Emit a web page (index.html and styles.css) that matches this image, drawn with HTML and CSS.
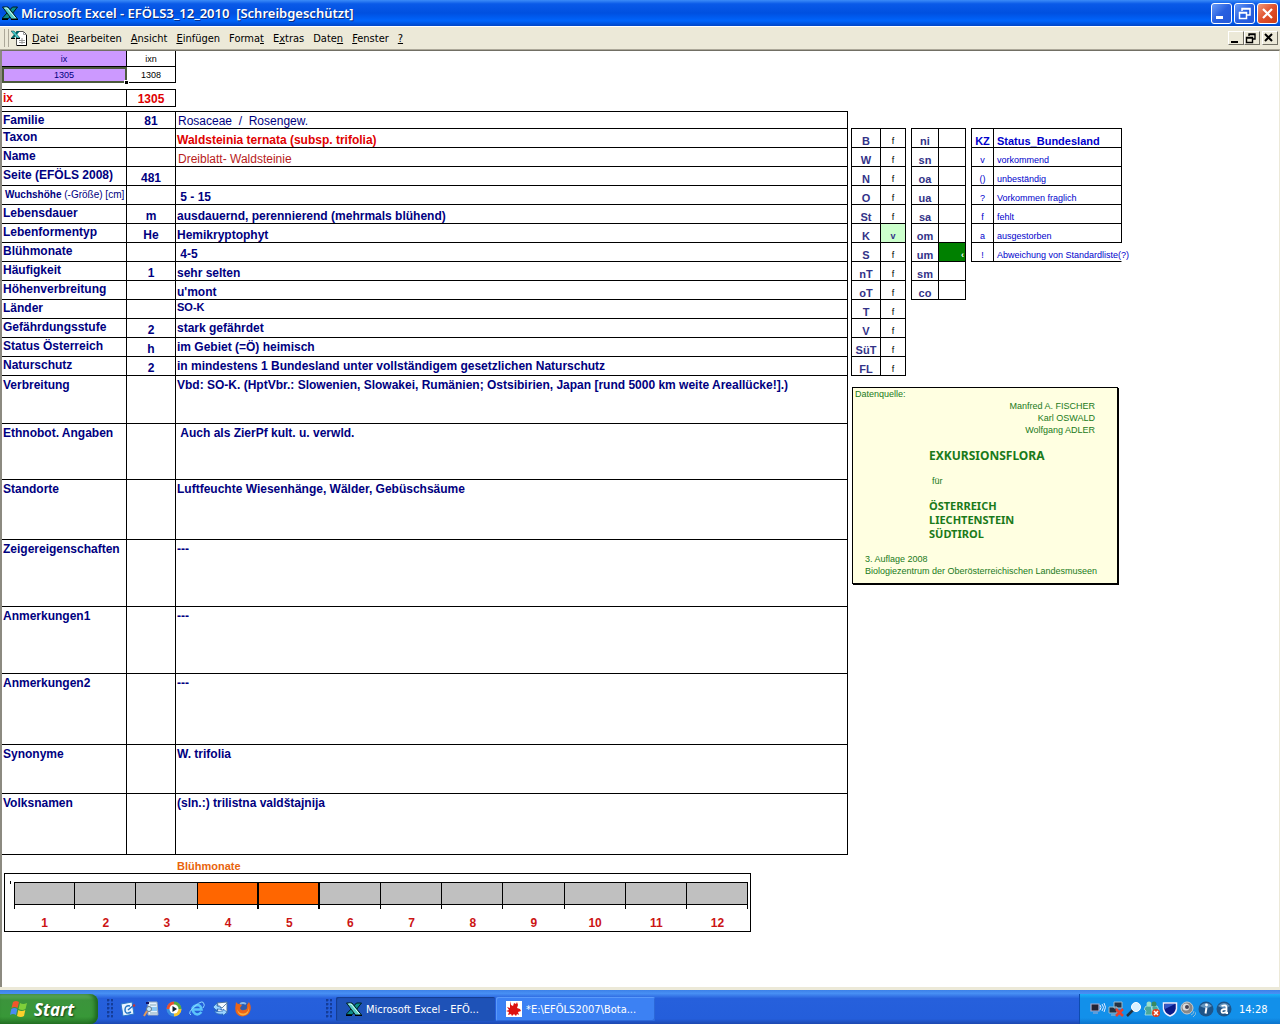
FILE: index.html
```html
<!DOCTYPE html>
<html lang="de">
<head>
    <meta charset="UTF-8">
    <title>Microsoft Excel - EFÖLS3_12_2010</title>
    <link rel="stylesheet" href="styles.css">
</head>
<body>
    <svg class="defs" width="0" height="0" aria-hidden="true">
        <symbol id="excel" viewBox="0 0 16 16">
            <path d="M0 13.500h6.500l9-11.500h-5z" fill="#0c8c8c" stroke="#001c1c"/>
            <path d="M.5 2h5.500l9.500 12h-6z" fill="#58ccc4" stroke="#001c1c"/>
            <path d="M2.500 3h2.500l8.500 10" fill="none" stroke="#d8fff8"/>
            <path d="M0 14.500h6M9 14.500h7" stroke="#000"/>
        </symbol>
    </svg>

    <header class="title-bar">
        <svg class="icon"><use href="#excel"/></svg>
        <h1>Microsoft Excel - EFÖLS3_12_2010 &nbsp;[Schreibgeschützt]</h1>
        <div class="window-buttons">
            <button aria-label="Minimieren"><svg viewBox="0 0 19 19"><path d="M4 13.500h7" stroke="#fff" stroke-width="3"/></svg></button>
            <button aria-label="Wiederherstellen"><svg viewBox="0 0 19 19"><path d="M7 7V4.500h8V11h-3M7 5h8" fill="none" stroke="#fff" stroke-width="1.500"/><path d="M4.500 8.500h7v6h-7zM4 9h8" fill="none" stroke="#fff" stroke-width="1.500"/></svg></button>
            <button class="close" aria-label="Schließen"><svg viewBox="0 0 19 19"><path d="M5 5l9 9M14 5l-9 9" stroke="#fff" stroke-width="2.200"/></svg></button>
        </div>
    </header>

    <nav class="menu-bar">
        <span class="grip"></span>
        <svg class="icon" viewBox="0 0 16 16">
            <path d="M5.500 1.500h7l3 3v11h-10z" fill="#fff" stroke="#555"/>
            <path d="M15.500 5v10.500H6" fill="none" stroke="#000"/>
            <path d="M12.500 1.500v3h3M8 10.500h6M8 12.500h6M11 8v6" fill="none" stroke="#999"/>
            <path d="M9 1H6L0 8h3z" fill="#066"/>
            <path d="M0 1h3l6 7H6z" fill="#4cc" stroke="#033" stroke-width=".5"/>
            <path d="M0 8.500h4M5 8.500h4" stroke="#000"/>
        </svg>
        <button><u>D</u>atei</button>
        <button><u>B</u>earbeiten</button>
        <button><u>A</u>nsicht</button>
        <button><u>E</u>infügen</button>
        <button>Forma<u>t</u></button>
        <button>E<u>x</u>tras</button>
        <button>Date<u>n</u></button>
        <button><u>F</u>enster</button>
        <button><u>?</u></button>
        <div class="doc-buttons">
            <button aria-label="Mappe minimieren"><svg viewBox="0 0 12 12"><path d="M2 10h7" stroke="#000" stroke-width="2"/></svg></button>
            <button aria-label="Mappe wiederherstellen"><svg viewBox="0 0 12 12"><path d="M4 4V2h6v5H8M4 2.500h6M1.500 5.500h6v5h-6zM1.500 6h6" fill="none" stroke="#000" stroke-width="1.400"/></svg></button>
            <button class="doc-close" aria-label="Mappe schließen"><svg viewBox="0 0 12 12"><path d="M2 2l7 7M9 2l-7 7" stroke="#000" stroke-width="2"/></svg></button>
        </div>
    </nav>

    <main class="sheet">
        <section class="record">
            <table class="grid index-table">
                <tr><td class="col-label lilac">ix</td><td class="col-code">ixn</td></tr>
                <tr><td class="col-label lilac selected">1305<span class="handle"></span></td><td class="col-code">1308</td></tr>
            </table>

            <table class="grid current-table">
                <tr><th class="col-label" scope="row">ix</th><td class="col-code">1305</td></tr>
            </table>

            <table class="grid detail-table">
                <tr class="first"><th class="col-label" scope="row">Familie</th><td class="col-code">81</td><td class="plain">Rosaceae&nbsp; /&nbsp; Rosengew.</td></tr>
                <tr><th scope="row">Taxon</th><td class="col-code"></td><td class="taxon">Waldsteinia ternata (subsp. trifolia)</td></tr>
                <tr><th scope="row">Name</th><td class="col-code"></td><td class="plain name">Dreiblatt- Waldsteinie</td></tr>
                <tr><th scope="row">Seite (EFÖLS 2008)</th><td class="col-code">481</td><td></td></tr>
                <tr><th class="small" scope="row"><b>Wuchshöhe</b> (-Größe) [cm]</th><td class="col-code"></td><td>&nbsp;5 - 15</td></tr>
                <tr><th scope="row">Lebensdauer</th><td class="col-code">m</td><td>ausdauernd, perennierend (mehrmals blühend)</td></tr>
                <tr><th scope="row">Lebenformentyp</th><td class="col-code">He</td><td>Hemikryptophyt</td></tr>
                <tr><th scope="row">Blühmonate</th><td class="col-code"></td><td>&nbsp;4-5</td></tr>
                <tr><th scope="row">Häufigkeit</th><td class="col-code">1</td><td>sehr selten</td></tr>
                <tr><th scope="row">Höhenverbreitung</th><td class="col-code"></td><td>u'mont</td></tr>
                <tr><th scope="row">Länder</th><td class="col-code"></td><td class="lands">SO-K</td></tr>
                <tr class="mid"><th scope="row">Gefährdungsstufe</th><td class="col-code">2</td><td>stark gefährdet</td></tr>
                <tr class="mid"><th scope="row">Status Österreich</th><td class="col-code">h</td><td>im Gebiet (=Ö) heimisch</td></tr>
                <tr class="mid"><th scope="row">Naturschutz</th><td class="col-code">2</td><td>in mindestens 1 Bundesland unter vollständigem gesetzlichen Naturschutz</td></tr>
                <tr class="tall h48"><th scope="row">Verbreitung</th><td></td><td>Vbd: SO-K. (HptVbr.: Slowenien, Slowakei, Rumänien; Ostsibirien, Japan [rund 5000 km weite Areallücke!].)</td></tr>
                <tr class="tall h56"><th scope="row">Ethnobot. Angaben</th><td></td><td>&nbsp;Auch als ZierPf kult. u. verwld.</td></tr>
                <tr class="tall h60"><th scope="row">Standorte</th><td></td><td>Luftfeuchte Wiesenhänge, Wälder, Gebüschsäume</td></tr>
                <tr class="tall h67"><th scope="row">Zeigereigenschaften</th><td></td><td>---</td></tr>
                <tr class="tall h67"><th scope="row">Anmerkungen1</th><td></td><td>---</td></tr>
                <tr class="tall h71"><th scope="row">Anmerkungen2</th><td></td><td>---</td></tr>
                <tr class="tall h49"><th scope="row">Synonyme</th><td></td><td>W. trifolia</td></tr>
                <tr class="tall h61"><th scope="row">Volksnamen</th><td></td><td>(sln.:) trilistna valdštajnija</td></tr>
            </table>

            <h2>Blühmonate</h2>
            <div class="chart">
                <ol class="months">
                    <li><span class="bar"></span>1</li>
                    <li><span class="bar"></span>2</li>
                    <li><span class="bar"></span>3</li>
                    <li><span class="bar bloom"></span>4</li>
                    <li><span class="bar bloom"></span>5</li>
                    <li><span class="bar"></span>6</li>
                    <li><span class="bar"></span>7</li>
                    <li><span class="bar"></span>8</li>
                    <li><span class="bar"></span>9</li>
                    <li><span class="bar"></span>10</li>
                    <li><span class="bar"></span>11</li>
                    <li><span class="bar"></span>12</li>
                </ol>
            </div>
        </section>

        <aside class="side">
            <div class="side-tables">
                <table class="grid key-table lands-table">
                    <tr><th scope="row">B</th><td>f</td></tr>
                    <tr><th scope="row">W</th><td>f</td></tr>
                    <tr><th scope="row">N</th><td>f</td></tr>
                    <tr><th scope="row">O</th><td>f</td></tr>
                    <tr><th scope="row">St</th><td>f</td></tr>
                    <tr><th scope="row">K</th><td class="present">v</td></tr>
                    <tr><th scope="row">S</th><td>f</td></tr>
                    <tr><th scope="row">nT</th><td>f</td></tr>
                    <tr><th scope="row">oT</th><td>f</td></tr>
                    <tr><th scope="row">T</th><td>f</td></tr>
                    <tr><th scope="row">V</th><td>f</td></tr>
                    <tr><th scope="row">SüT</th><td>f</td></tr>
                    <tr><th scope="row">FL</th><td>f</td></tr>
                </table>

                <table class="grid key-table height-table">
                    <tr><th scope="row">ni</th><td></td></tr>
                    <tr><th scope="row">sn</th><td></td></tr>
                    <tr><th scope="row">oa</th><td></td></tr>
                    <tr><th scope="row">ua</th><td></td></tr>
                    <tr><th scope="row">sa</th><td></td></tr>
                    <tr><th scope="row">om</th><td></td></tr>
                    <tr><th scope="row">um</th><td class="marked">‹</td></tr>
                    <tr><th scope="row">sm</th><td></td></tr>
                    <tr><th scope="row">co</th><td></td></tr>
                </table>

                <table class="grid key-table status-table">
                    <tr><th scope="col">KZ</th><th scope="col">Status_Bundesland</th></tr>
                    <tr><td>v</td><td>vorkommend</td></tr>
                    <tr><td>()</td><td>unbeständig</td></tr>
                    <tr><td>?</td><td>Vorkommen fraglich</td></tr>
                    <tr><td>f</td><td>fehlt</td></tr>
                    <tr><td>a</td><td>ausgestorben</td></tr>
                    <tr><td>!</td><td class="open">Abweichung von Standardliste(?)</td></tr>
                </table>
            </div>

            <div class="source">
                <p class="source-title">Datenquelle:</p>
                <p class="authors">Manfred A. FISCHER<br>Karl OSWALD<br>Wolfgang ADLER</p>
                <div class="book">
                    <h3>EXKURSIONSFLORA</h3>
                    <p>für</p>
                    <h4>ÖSTERREICH<br>LIECHTENSTEIN<br>SÜDTIROL</h4>
                </div>
                <p class="edition">3. Auflage 2008<br>Biologiezentrum der Oberösterreichischen Landesmuseen</p>
            </div>
        </aside>
    </main>

    <footer class="taskbar">
        <button class="start">
            <svg viewBox="0 0 20 20">
                <path d="M4 3q3-2 6 0l-1.500 6q-3-2-6 0z" fill="#f0562c"/>
                <path d="M11 4q3 2 7 0l-1.500 6q-3 2-7 0z" fill="#7fcf3a"/>
                <path d="M2.300 10q3-2 6 0L7 16q-3-2-6 0z" fill="#4a8cf0"/>
                <path d="M9.300 11q3 2 7 0L15 17q-3 2-7 0z" fill="#fbd02c"/>
            </svg>
            Start
        </button>

        <div class="quick-launch">
            <span class="dots"></span>
            <a href="#" aria-label="Desktop anzeigen"><svg viewBox="0 0 16 16"><path d="M1 3l11-2 2 12-11 2z" fill="#e8f4ff" stroke="#2a78c8"/><path d="M10 5q-5-1-5 4t6 2M8 9l6-5" fill="none" stroke="#2274c4" stroke-width="1.500"/><path d="M13 5l2-1" stroke="#c33" stroke-width="2"/></svg></a>
            <a href="#" aria-label="Suche"><svg viewBox="0 0 16 16"><path d="M5 1h9l1 13H5z" fill="#e4f2ff" stroke="#9ab"/><path d="M3 2h3" stroke="#116" stroke-width="2"/><path d="M7 4h6M7 12h7" stroke="#8ab"/><path d="M6 6h8v4H6z" fill="#8cc8f4"/><circle cx="6" cy="8" r="2.500" fill="#c4e8fc" stroke="#678"/><path d="M4 10l-3 5" stroke="#e09858" stroke-width="2"/></svg></a>
            <a href="#" aria-label="Media Player"><svg viewBox="0 0 16 16"><circle cx="8" cy="8" r="7.500" fill="#3a8ee0"/><path d="M8 8V.5A7.500 7.500 0 0 0 .5 8z" fill="#e85030"/><path d="M8 8h7.500A7.500 7.500 0 0 0 8 .5z" fill="#58a840"/><path d="M8 8v7.500A7.500 7.500 0 0 0 15.500 8z" fill="#f4c430"/><circle cx="8" cy="8" r="4.500" fill="#fff"/><path d="M6.500 5l4.500 3-4.500 3z" fill="#123"/></svg></a>
            <a href="#" aria-label="Internet Explorer"><svg viewBox="0 0 16 16"><path d="M12.500 11Q8 16 4.500 11T8 4q4 0 4.500 4.500H4.500" fill="none" stroke="#5cc4fa" stroke-width="2.500"/><path d="M2 14Q-2 12 6 5t9-2q1 1-1 4" fill="none" stroke="#8cd8ff"/></svg></a>
            <a href="#" aria-label="Outlook Express"><svg viewBox="0 0 16 16"><path d="M5 2l10-1v11l-9 1z" fill="#f4f9ff" stroke="#579"/><path d="M5 3l5 4 5-5" fill="none" stroke="#68a"/><path d="M1 6l4-4v3q4 0 5 4-2-1-5-1v2zM15 11l-4 4v-2q-6 1-9-3 4 1 9 0V8z" fill="#9cd4ff" stroke="#1c60b8" stroke-width=".7"/></svg></a>
            <a href="#" aria-label="Firefox"><svg viewBox="0 0 16 16"><circle cx="8" cy="7" r="6.500" fill="#2c5cb0"/><path d="M5 3q3-2 6 0" fill="none" stroke="#88b8ec" stroke-width="2"/><path d="M1 1q1 2 3 2l3 1-2 3q1 3 4 2 4 0 3-5l2-3q3 5 1 9.500T7 15.500Q-1 14 .5 5z" fill="#ec6418"/><path d="M2 8q2 5 7 4.500T14 5q1 9-6 9.500Q3 14 2 8z" fill="#f8b040"/></svg></a>
            <span class="dots"></span>
        </div>

        <div class="tasks">
            <button class="active"><svg class="icon"><use href="#excel"/></svg>Microsoft Excel - EFÖ...</button>
            <button>
                <svg class="icon" viewBox="0 0 16 16"><path d="M0 0h16v16H0z" fill="#fff"/><path d="M4 0l1 4 2 1 1-3 2 1 1-2 1 3-1 3 3 1 1 2-3 1 1 3-2-1-1 2-2-2-2 2-1-2-3 1 1-3-3-1 3-1-2-3 3 1z" fill="#d11"/></svg>
                *E:\EFÖLS2007\Bota...
            </button>
        </div>

        <div class="tray">
            <svg viewBox="0 0 16 16"><path d="M1 3h8v7H1zM3 12h5" fill="#223" stroke="#aac" stroke-width="1.200"/><path d="M10 4q2 2 0 5M12 3q3 3 0 7M14 2q3 4 0 9" fill="none" stroke="#e0eaff"/></svg>
            <svg viewBox="0 0 16 16"><path d="M6 1h8v6H6zM1 6h8v6H1zM3 14h5" fill="#234" stroke="#9bc"/><path d="M8 8l7 7M15 8l-7 7" stroke="#e8402c" stroke-width="2.500"/></svg>
            <svg viewBox="0 0 16 16"><path d="M7 9l-6 6" stroke="#234" stroke-width="2.500"/><circle cx="10" cy="6" r="4.500" fill="#d8f0ff" stroke="#fff"/></svg>
            <svg viewBox="0 0 16 16"><path d="M2 5h5l1 4 2 5H1l1-4-2-2zM8 5h5l2 4-3 5H8z" fill="#4aa89c" stroke="#bee" stroke-width=".7"/><circle cx="5" cy="3" r="2.500" fill="#9de0c8"/><circle cx="10" cy="3" r="2.500" fill="#3a8a60"/><circle cx="12" cy="12" r="4" fill="#e0401c"/><path d="M10 10l4 4M14 10l-4 4" stroke="#fff" stroke-width="1.500"/></svg>
            <svg viewBox="0 0 16 16"><path d="M1.500 2h13v6q-1 5-6.500 7Q2.500 13 1.500 8z" fill="#0a1a88" stroke="#eef" stroke-width="1.500"/><path d="M3 3h10L3 8z" fill="#3458c8"/></svg>
            <svg viewBox="0 0 16 16"><circle cx="7" cy="7" r="6" fill="#888" stroke="#ccc"/><circle cx="6" cy="6" r="3.500" fill="#ddd"/><circle cx="7" cy="6" r="2" fill="#445"/><path d="M11 14q3-1 3-4M13 16q3-2 3-5" fill="none" stroke="#8bd"/></svg>
            <svg viewBox="0 0 16 16"><circle cx="8" cy="8" r="7.500" fill="#1e5488"/><path d="M2 5q6-6 12 0-6 4-12 0z" fill="#6496c0"/><circle cx="8.500" cy="4" r="1.400" fill="#fff"/><path d="M8.500 6.500l-1 6" fill="none" stroke="#fff" stroke-width="2"/></svg>
            <svg viewBox="0 0 16 16"><circle cx="8" cy="8" r="7.500" fill="#1e5488"/><path d="M2 5q6-6 12 0-6 4-12 0z" fill="#6496c0"/><path d="M5.500 5q5-2 5 1.500V12h1.500M10 8q-5 0-4.500 2.500T10 11" fill="none" stroke="#fff" stroke-width="1.800"/></svg>
            <time>14:28</time>
        </div>
    </footer>
</body>
</html>
```
FILE: styles.css
```css
* {
    box-sizing: border-box;
}

body {
    margin: 0;
    height: 100vh;
    display: flex;
    flex-direction: column;
    background-color: #ece9d8;
    font-family: "Liberation Sans", Arial, sans-serif;
    font-size: 12px;
    color: #000080;
    overflow: hidden;
}

h1, h2, h3, h4, p, ol {
    margin: 0;
    padding: 0;
}

button {
    font: inherit;
    color: inherit;
    border: none;
    background: none;
    padding: 0;
}

svg {
    display: block;
}

.defs {
    position: absolute;
}

.icon {
    width: 16px;
    height: 16px;
    flex: none;
}

/* Title bar */
.title-bar {
    height: 26px;
    flex: none;
    display: flex;
    align-items: center;
    gap: 3px;
    padding: 0 2px;
    background: linear-gradient(#3c8cf8, #0a5ae8 15%, #0050e0 50%, #0064fc 80%, #0046c8);
    color: #fff;
}

.title-bar h1 {
    font-family: "Noto Sans", sans-serif;
    font-size: 13px;
    font-weight: 600;
    text-shadow: 1px 1px #0a2a80;
}

.window-buttons {
    margin-left: auto;
    display: flex;
    gap: 2px;
}

.window-buttons button {
    width: 21px;
    height: 21px;
    border: 1px solid #fff;
    border-radius: 3px;
    background: linear-gradient(135deg, #6a9cf8, #2860e0 50%, #2458d8);
}

.window-buttons .close {
    background: linear-gradient(135deg, #f09878, #e0502c 50%, #cc3c14);
}

/* Menu bar */
.menu-bar {
    height: 24px;
    flex: none;
    display: flex;
    align-items: center;
    border-top: 1px solid #fff;
    border-bottom: 1px solid #aca899;
    padding: 0 2px 0 4px;
    font-family: "DejaVu Sans Condensed", "DejaVu Sans", sans-serif;
    font-size: 11px;
    color: #000;
}

.menu-bar > button {
    padding: 0 4px 0 5px;
}

.grip {
    width: 5px;
    height: 18px;
    margin-right: 2px;
    border-left: 1px solid #aca899;
    border-right: 1px solid #aca899;
}

.doc-buttons {
    margin-left: auto;
    display: flex;
}

.doc-buttons button {
    width: 16px;
    height: 14px;
    border: 1px solid #fff;
    border-right-color: #716f64;
    border-bottom-color: #716f64;
}

.doc-buttons svg {
    width: 12px;
    height: 12px;
}

.doc-buttons .doc-close {
    margin-left: 2px;
}

/* Worksheet */
.sheet {
    flex: 1;
    min-height: 0;
    display: flex;
    background-color: #fff;
    border-top: 1px solid #716f64;
    border-left: 2px solid #8c8a80;
    border-right: 1px solid #ece9d8;
    margin-bottom: 3px;
    overflow: hidden;
}

.record {
    flex: 1;
}

.grid {
    border-collapse: separate;
    border-spacing: 0;
    table-layout: fixed;
    border-top: 1px solid #000;
}

.grid th, .grid td {
    padding: 0 1px;
    line-height: 13px;
    border-right: 1px solid #000;
    border-bottom: 1px solid #000;
    white-space: nowrap;
    text-align: left;
    vertical-align: bottom;
    font-weight: bold;
}

.grid th {
    padding-top: 2px;
    vertical-align: top;
}

.grid .col-label {
    width: 125px;
}

.grid .col-code {
    width: 49px;
    text-align: center;
}

.index-table {
    width: 174px;
    border-top: none;
}

.index-table tr {
    height: 16px;
}

.grid.index-table td {
    font-size: 9px;
    font-weight: normal;
    text-align: center;
}

.index-table .col-code {
    color: #000;
}

.lilac {
    background-color: #cc99ff;
}

.grid .selected {
    position: relative;
    outline: 2px solid #4c5a3c;
    outline-offset: -2px;
}

.handle {
    position: absolute;
    right: -3px;
    bottom: -3px;
    width: 5px;
    height: 5px;
    border: 1px solid #fff;
    background-color: #000;
}

.current-table {
    width: 174px;
    margin: 6px 0 4px;
}

.current-table tr {
    height: 17px;
}

.current-table th, .current-table td {
    color: #e00000;
}

.detail-table {
    width: 100%;
}

.detail-table tr {
    height: 19px;
}

.detail-table .first {
    height: 17px;
}

.detail-table .mid td:last-child {
    vertical-align: middle;
}

.detail-table .tall td {
    vertical-align: top;
}

.detail-table .tall th, .detail-table .tall td {
    padding-top: 3px;
}

.detail-table .h48 { height: 48px; }
.detail-table .h49 { height: 49px; }
.detail-table .h56 { height: 56px; }
.detail-table .h60 { height: 60px; }
.detail-table .h61 { height: 61px; }
.detail-table .h67 { height: 67px; }
.detail-table .h71 { height: 71px; }

.grid .plain {
    padding-left: 2px;
    font-weight: normal;
}

.grid .name {
    color: #b81c1c;
}

.grid .taxon {
    color: #e00000;
}

.grid .small {
    padding-left: 3px;
    font-size: 10px;
    font-weight: normal;
}

.grid .lands {
    padding-top: 1px;
    font-size: 11px;
    vertical-align: top;
}

/* Flowering months */
h2 {
    padding: 4px 0 0 175px;
    font-size: 11px;
    line-height: 14px;
    color: #e8640c;
}

.chart {
    margin: 0 97px 0 2px;
    padding: 8px 2px 0 9px;
    height: 59px;
    border: 1px solid #000;
}

.months {
    position: relative;
    display: grid;
    grid-template-columns: repeat(12, 1fr);
    list-style: none;
}

/* end of the value axis */
.months::before {
    content: "";
    position: absolute;
    left: -4px;
    top: -1px;
    width: 1px;
    height: 3px;
    background-color: #000;
}

.months li {
    text-align: center;
    font-weight: bold;
    line-height: 28px;
    color: #cc1414;
}

.bar {
    display: block;
    height: 27px;
    border-right: 1px solid #000;
    background: linear-gradient(#000 1px, #c0c0c0 1px 22px, #000 22px 23px, #fff 23px);
}

.months li:first-child .bar {
    border-left: 1px solid #000;
}

.bloom {
    border-right-width: 2px;
    background: linear-gradient(#000 1px, #ff6600 1px 22px, #000 22px 23px, #fff 23px);
}

/* Side panel */
.side {
    width: 431px;
    flex: none;
    padding: 77px 0 0 3px;
}

.side-tables {
    display: flex;
    align-items: flex-start;
    gap: 5px;
}

.key-table {
    border-left: 1px solid #000;
    width: 55px;
}

.key-table tr {
    height: 19px;
}

.grid.key-table th, .grid.key-table td {
    vertical-align: bottom;
    text-align: center;
    font-size: 11px;
    line-height: 12px;
}

.key-table th {
    color: #333388;
}

.key-table th:first-child {
    width: 29px;
}

.height-table th:first-child {
    width: 27px;
}

.grid.lands-table td {
    font-size: 9px;
    font-weight: normal;
    color: #000;
}

.grid.lands-table .present {
    background-color: #ccffcc;
    font-weight: bold;
    color: #333388;
}

.grid.height-table .marked {
    background-color: #008000;
    color: #fff;
    font-size: 9px;
    text-align: right;
}

.status-table {
    width: 151px;
}

.status-table th, .status-table td {
    color: #0000cc;
}

.status-table th:first-child {
    width: 22px;
}

.grid.status-table td {
    font-size: 9px;
    font-weight: normal;
}

.grid.status-table th:last-child, .grid.status-table td:last-child {
    padding-left: 3px;
    text-align: left;
}

.grid.status-table .open {
    border-right-color: transparent;
}

/* Source note */
.source {
    width: 266px;
    margin: 11px 0 0 1px;
    padding: 1px 2px 6px;
    border: 1px solid #000;
    box-shadow: 1px 1px #000;
    background-color: #ffffe1;
    color: #1a7a1a;
    font-size: 9px;
    line-height: 12px;
}

.source-title {
    line-height: 11px;
}

.authors {
    padding-right: 20px;
    text-align: right;
}

.book {
    padding: 13px 0 12px 74px;
}

.book p {
    padding: 12px 3px;
}

.book h3 {
    font-family: "Noto Sans", sans-serif;
    font-size: 12px;
    line-height: 14px;
}

.book h4 {
    font-family: "Noto Sans", sans-serif;
    font-size: 11px;
    line-height: 14px;
}

.edition {
    padding-left: 10px;
}

/* Taskbar */
.taskbar {
    height: 34px;
    flex: none;
    display: flex;
    background: linear-gradient(#3c80e8, #4890f4 10%, #2660dc 25%, #245edb 85%, #1c48b0);
    color: #fff;
    font-family: "DejaVu Sans Condensed", "DejaVu Sans", sans-serif;
    font-size: 11px;
}

.start {
    width: 98px;
    margin-top: 4px;
    padding-left: 9px;
    display: flex;
    align-items: center;
    gap: 5px;
    border-radius: 0 8px 8px 0;
    background: linear-gradient(#6cb46c, #3c943c 20%, #389838 75%, #287828);
    box-shadow: inset -3px 0 4px #1c641c;
    font-family: "Open Sans", sans-serif;
    font-size: 17px;
    font-weight: bold;
    font-style: italic;
    text-shadow: 1px 1px 2px #123c12;
}

.start svg {
    width: 20px;
    height: 20px;
}

.quick-launch {
    width: 238px;
    padding: 3px 4px 0 9px;
    display: flex;
    align-items: center;
    gap: 7px;
}

.quick-launch svg {
    width: 16px;
    height: 16px;
}

.dots {
    width: 6px;
    height: 20px;
    background: radial-gradient(circle at 1px 1px, #143c98 1px, transparent 2px) 0 0 / 4px 4px;
}

.dots:last-child {
    margin-left: auto;
}

.tasks {
    flex: 1;
    display: flex;
    gap: 1px;
    padding: 7px 0 3px;
}

.tasks button {
    width: 159px;
    padding-left: 10px;
    display: flex;
    align-items: center;
    gap: 4px;
    border-radius: 2px;
    background-color: #3c81f3;
    box-shadow: inset 1px 1px #5a9afa, inset -1px -1px #2c68d8;
}

.tasks .active {
    background-color: #1e52b7;
    box-shadow: inset 1px 1px 1px #143c8c;
}

.tray {
    width: 201px;
    margin-top: 4px;
    padding-left: 10px;
    display: flex;
    align-items: center;
    gap: 2px;
    border-left: 1px solid #0c4cb0;
    background: linear-gradient(#1cb0f8, #1290ea 15%, #1290ea 80%, #0c74cc);
}

.tray svg {
    width: 16px;
    height: 16px;
}

.tray time {
    margin-left: 5px;
}
```
